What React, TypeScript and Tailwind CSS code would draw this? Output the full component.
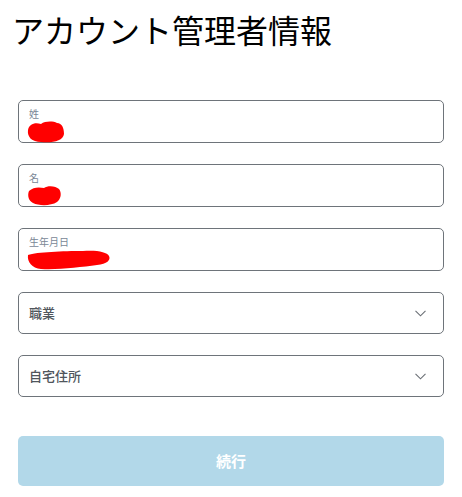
import React from "react";

const font = { fontFamily: '"Noto Sans CJK JP", "Noto Sans", sans-serif' };

function Scribble({ w, h, d }: { w: number; h: number; d: string }) {
  return (
    <svg width={w} height={h} viewBox={`0 0 ${w} ${h}`} className="ml-[-2px] block">
      <path d={d} fill="#ff0000" />
    </svg>
  );
}

function TextField({ label, children }: { label: string; children: React.ReactNode }) {
  return (
    <div className="h-[43px] rounded-[5px] border border-[#6e747a] pl-[10px] pt-[6px]">
      <div className="text-[10px] leading-[13px] text-[#7a8796]">{label}</div>
      <div className="mt-[1px] h-[21px]">{children}</div>
    </div>
  );
}

function SelectField({ label }: { label: string }) {
  return (
    <div className="flex h-[42px] items-center justify-between rounded-[5px] border border-[#6e747a] pl-[10px] pr-[17px]">
      <span className="text-[13px] font-medium text-[#50565c]">{label}</span>
      <svg width="11" height="7" viewBox="0 0 11 7">
        <path d="M0.5 0.8 L5.5 5.8 L10.5 0.8" stroke="#6a6f75" strokeWidth="1.1" fill="none" />
      </svg>
    </div>
  );
}

export default function App() {
  return (
    <div className="min-h-[497px] w-[462px] bg-white" style={font}>
      <div className="px-[18px]">
        <h1 className="ml-[-6px] pt-[9px] text-[32px] leading-[41px] text-black">アカウント管理者情報</h1>
        <div className="mt-[50px] flex flex-col gap-[21px]">
          <TextField label="姓">
            <Scribble
              w={38}
              h={22}
              d="M1 9 C2 3 8 1 14 3 C18 0 26 0 30 2 C35 2 37 7 37 13 C36 20 26 22 14 21 C5 21 0 16 1 9 Z"
            />
          </TextField>
          <TextField label="名">
            <Scribble
              w={38}
              h={22}
              d="M2 6 C6 2 12 2 17 3 C21 0 29 1 32 4 C35 8 34 14 30 17 C24 21 12 21 6 18 C2 16 0 11 2 6 Z"
            />
          </TextField>
          <TextField label="生年月日">
            <Scribble
              w={84}
              h={22}
              d="M1 6 C10 3 36 2 56 2 C70 1 80 3 82 7 C84 11 80 15 70 16 C54 18 32 21 14 20 C5 19 0 13 1 6 Z"
            />
          </TextField>
          <SelectField label="職業" />
          <SelectField label="自宅住所" />
        </div>
        <button className="mt-[39px] flex h-[50px] w-full items-center justify-center rounded-[5px] bg-[#b2d8e9] text-[15px] font-bold text-white">
          続行
        </button>
      </div>
    </div>
  );
}
